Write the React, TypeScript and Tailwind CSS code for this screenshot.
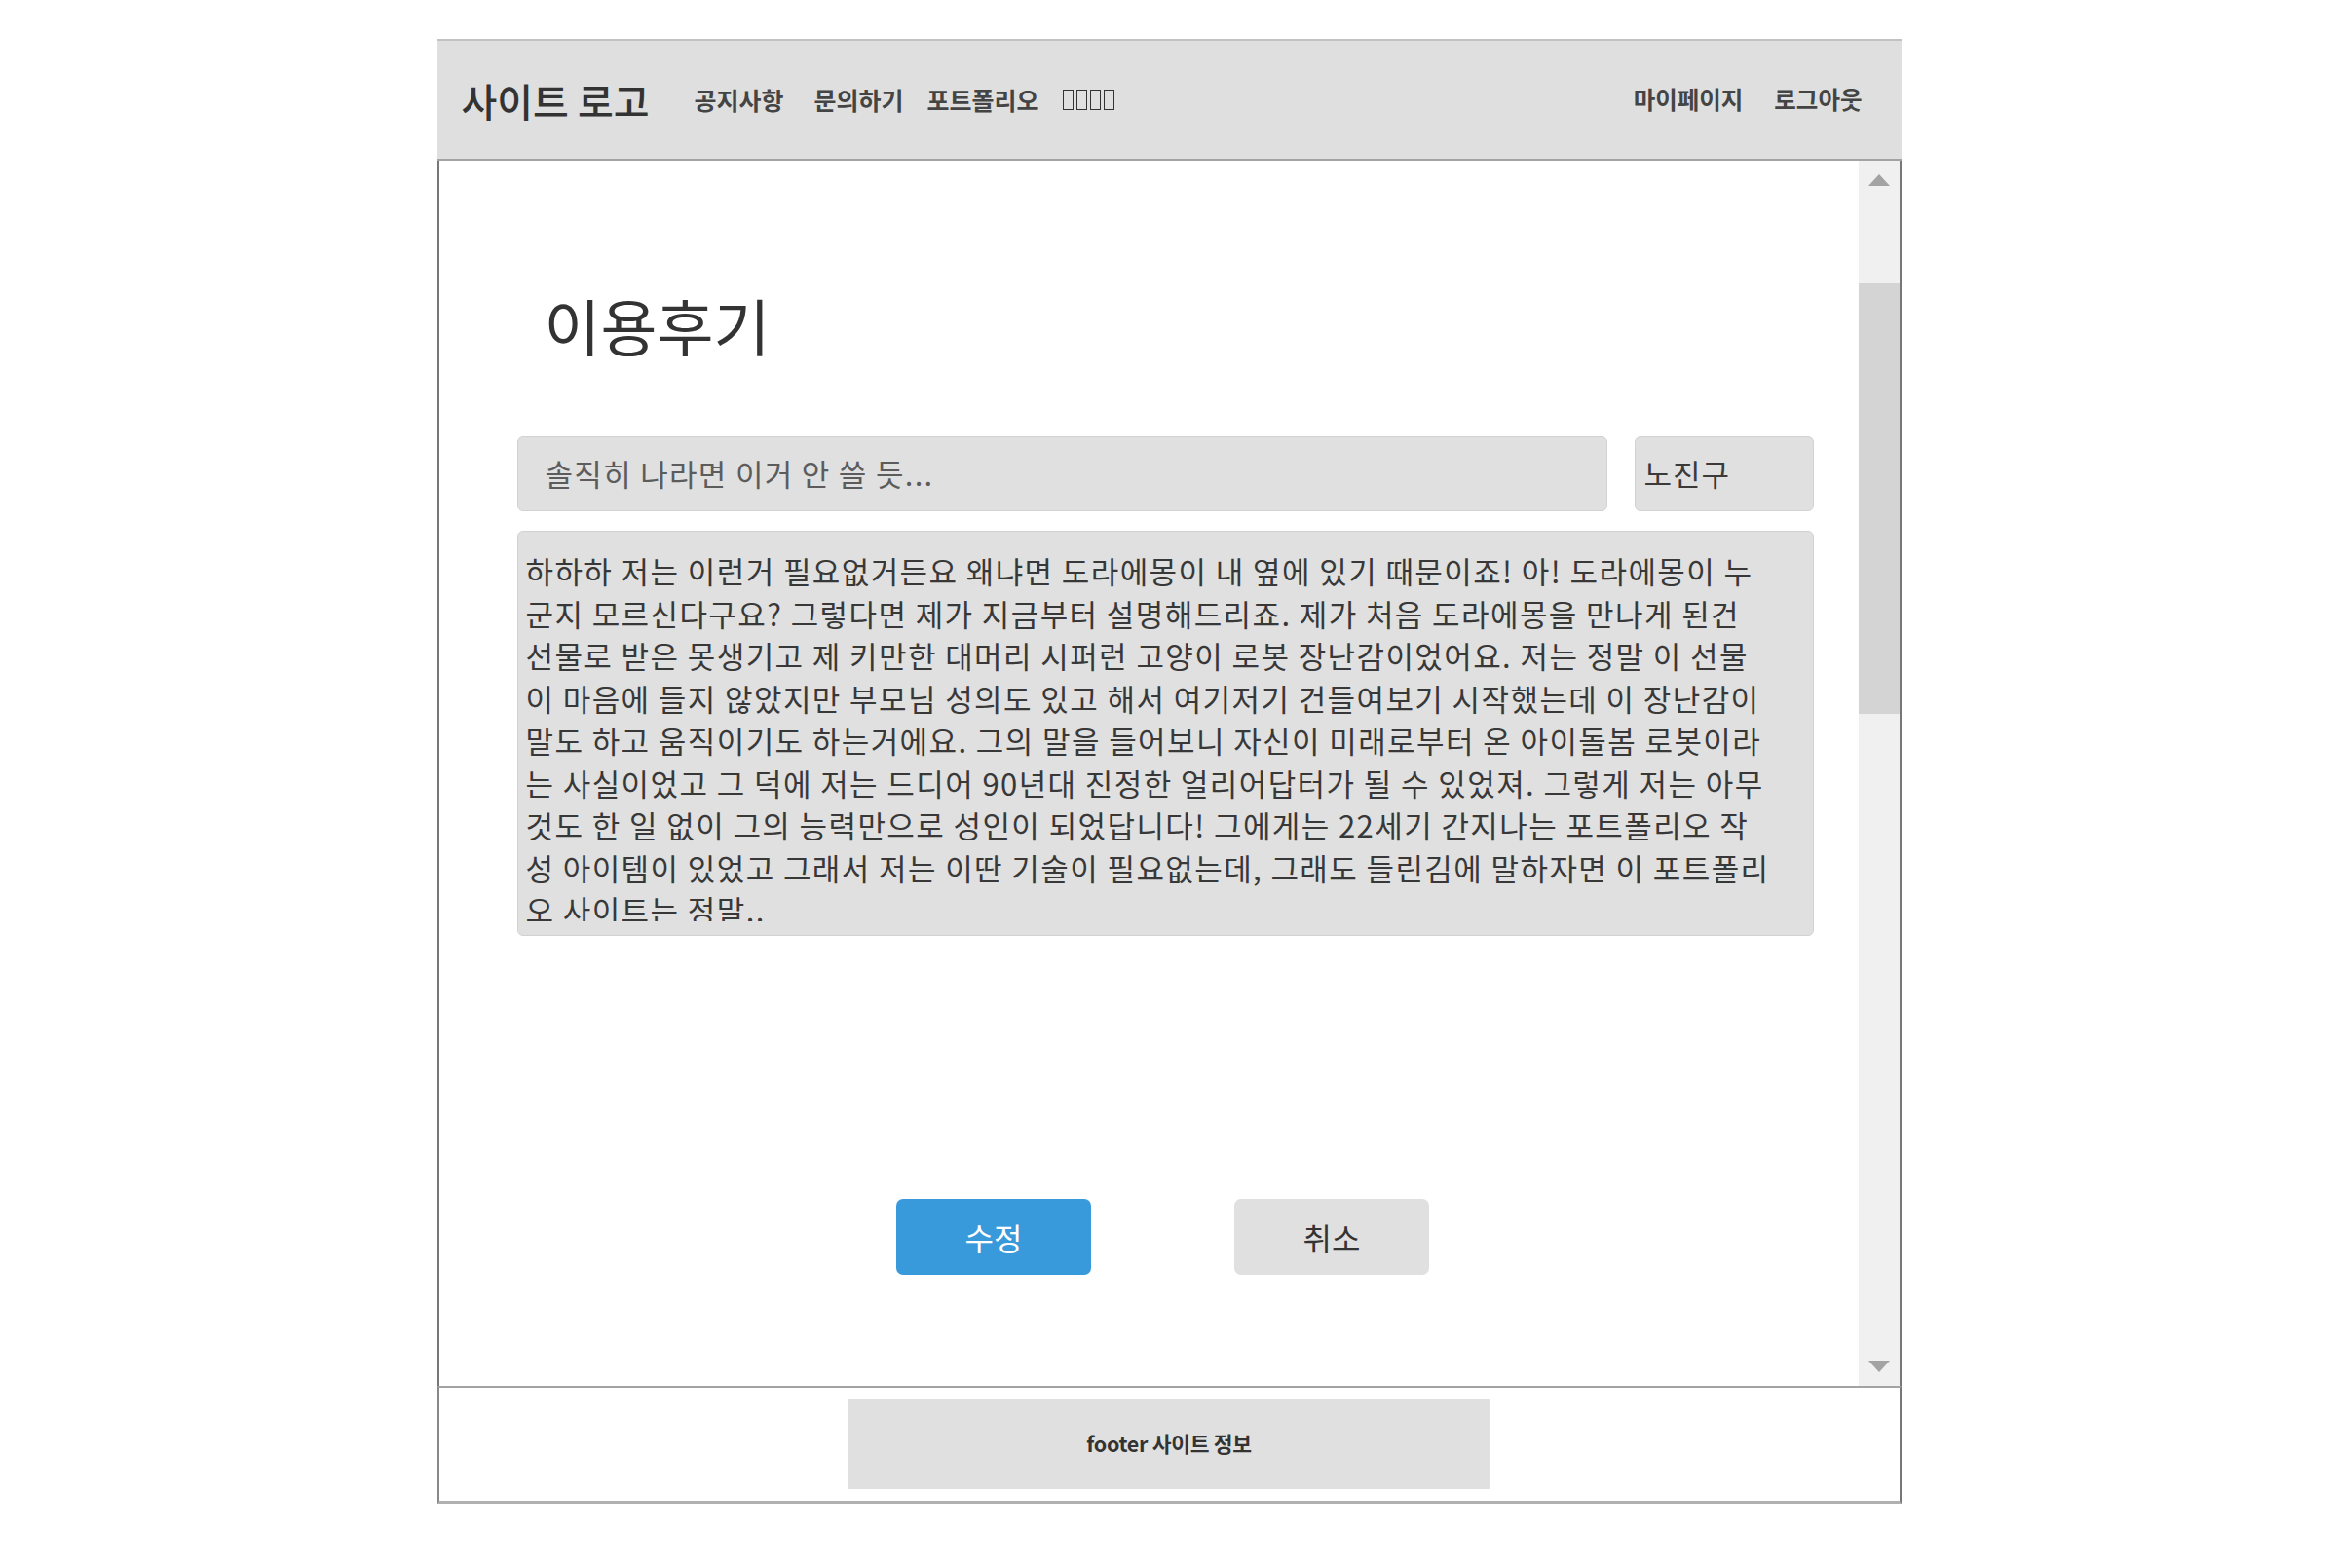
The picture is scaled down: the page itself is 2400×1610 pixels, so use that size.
const reviewLines = [
  "하하하 저는 이런거 필요없거든요 왜냐면 도라에몽이 내 옆에 있기 때문이죠! 아! 도라에몽이 누",
  "군지 모르신다구요? 그렇다면 제가 지금부터 설명해드리죠. 제가 처음 도라에몽을 만나게 된건",
  "선물로 받은 못생기고 제 키만한 대머리 시퍼런 고양이 로봇 장난감이었어요. 저는 정말 이 선물",
  "이 마음에 들지 않았지만 부모님 성의도 있고 해서 여기저기 건들여보기 시작했는데 이 장난감이",
  "말도 하고 움직이기도 하는거에요. 그의 말을 들어보니 자신이 미래로부터 온 아이돌봄 로봇이라",
  "는 사실이었고 그 덕에 저는 드디어 90년대 진정한 얼리어답터가 될 수 있었져. 그렇게 저는 아무",
  "것도 한 일 없이 그의 능력만으로 성인이 되었답니다! 그에게는 22세기 간지나는 포트폴리오 작",
  "성 아이템이 있었고 그래서 저는 이딴 기술이 필요없는데, 그래도 들린김에 말하자면 이 포트폴리",
  "오 사이트는 정말..",
];

function Header() {
  return (
    <header className="h-[125px] bg-[#dfdfdf] border-t-2 border-b-2 border-t-[#c2c2c2] border-b-[#a3a3a3] flex items-center pl-[25px] pr-[40px]">
      <div className="text-[40px] font-medium text-[#333] leading-none">사이트 로고</div>
      <nav className="flex items-center gap-[24px] ml-[46px] text-[25px] font-bold text-[#444]">
        <span className="mr-[7px]">공지사항</span>
        <span>문의하기</span>
        <span>포트폴리오</span>
        {/* missing-glyph boxes */}
        <span className="flex items-center gap-[3px]">
          {[0, 1, 2, 3].map((i) => (
            <span key={i} className="inline-block w-[11px] h-[21px] border-[1.5px] border-[#333]" />
          ))}
        </span>
      </nav>
      <div className="ml-auto flex items-center gap-[32px] text-[24.5px] font-bold text-[#444]">
        <span>마이페이지</span>
        <span>로그아웃</span>
      </div>
    </header>
  );
}

function Scrollbar() {
  return (
    <div className="w-[42px] bg-[#f0f0f0] flex flex-col shrink-0">
      <div className="h-[40px] flex items-center justify-center">
        <svg width="22" height="12" viewBox="0 0 22 12">
          <polygon points="11,0 22,12 0,12" fill="#a3a3a3" />
        </svg>
      </div>
      <div className="h-[86px]" />
      <div className="h-[442px] bg-[#d4d4d4]" />
      <div className="flex-1" />
      <div className="h-[40px] flex items-center justify-center">
        <svg width="22" height="12" viewBox="0 0 22 12">
          <polygon points="0,0 22,0 11,12" fill="#a3a3a3" />
        </svg>
      </div>
    </div>
  );
}

function ReviewEditor() {
  return (
    <div className="flex-1 pl-[80px] pr-[46px] pt-[136px]">
      <h1 className="pl-[28px] text-[63px] leading-none font-normal text-[#333]">이용후기</h1>

      <div className="mt-[84px] flex gap-[28px] h-[77px]">
        <div className="flex-1 flex items-center pl-[28px] bg-[#e0e0e0] border border-[#d2d2d2] rounded-[6px] text-[31px] tracking-[1.3px] text-[#5c5c5c]">
          솔직히 나라면 이거 안 쓸 듯...
        </div>
        <div className="w-[184px] flex items-center pl-[9px] bg-[#e0e0e0] border border-[#d2d2d2] rounded-[6px] text-[31px] tracking-[1px] text-[#3a3a3a]">
          노진구
        </div>
      </div>

      <div className="mt-[20px] h-[416px] bg-[#e0e0e0] border border-[#d2d2d2] rounded-[6px] pl-[8px] pt-[18px]">
        <div className="h-[382px] overflow-hidden text-[31px] leading-[43.5px] tracking-[1.4px] text-[#383838]">
          {reviewLines.map((line, i) => (
            <div key={i} className="whitespace-nowrap">
              {line}
            </div>
          ))}
        </div>
      </div>

      <div className="mt-[270px] flex justify-center gap-[147px] pr-[5px]">
        <button
          type="button"
          className="w-[200px] h-[78px] rounded-[7px] bg-[#3899db] text-white text-[32px]"
        >
          수정
        </button>
        <button
          type="button"
          className="w-[200px] h-[78px] rounded-[7px] bg-[#e0e0e0] text-[#333] text-[32px]"
        >
          취소
        </button>
      </div>
    </div>
  );
}

export default function App() {
  return (
    <div className="min-h-screen bg-white pt-[40px] font-['Noto_Sans_CJK_KR','Noto_Sans',sans-serif]">
      <div className="w-[1503px] mx-auto">
        <Header />
        <main className="h-[1258px] flex border-l-2 border-r-2 border-[#777]">
          <ReviewEditor />
          <Scrollbar />
        </main>
        <footer className="h-[121px] border-t-2 border-t-[#a3a3a3] border-l-2 border-r-2 border-l-[#888] border-r-[#777] border-b-[3px] border-b-[#b0b0b0] pt-[11px]">
          <div className="w-[660px] h-[93px] mx-auto bg-[#e0e0e0] flex items-center justify-center text-[21.5px] font-bold text-[#333] tracking-[-0.3px]">
            footer 사이트 정보
          </div>
        </footer>
      </div>
    </div>
  );
}
